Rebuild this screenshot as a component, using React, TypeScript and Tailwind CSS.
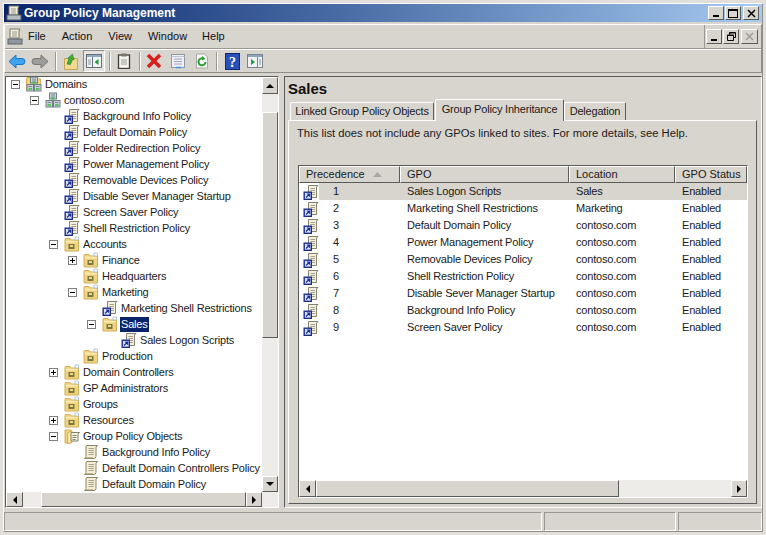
import { ReactNode } from 'react';

const raised = 'border border-t-white border-l-white border-r-[#5a5a58] border-b-[#5a5a58] bg-[#d8d4ce]';

function GpoScroll() {
  return (
    <svg width="16" height="16" viewBox="0 0 16 16" className="shrink-0">
      <path d="M4 1.500h10.500l-1.500 1.500v9.500q0 2-2 2H1.500q1.500-.5 1.500-2V3q0-1.500 1-1.500z" fill="#f4eed6" stroke="#8b8668" />
      <path d="M5.500 4.500h5.500M5.500 6.500h5.500M5.500 8.500h5.500M5.500 10.500h5" stroke="#a8a286" />
      <path d="M3 13.500h7" stroke="#c9bf92" />
    </svg>
  );
}

function GpoLink() {
  return (
    <svg width="16" height="16" viewBox="0 0 16 16" className="shrink-0">
      <path d="M5.500 1.500h9.500l-1.500 1.500v10.500H5.500z" fill="#f3f0e2" stroke="#85826e" />
      <path d="M7.500 4.500h4.500M7.500 6.500h4.500M9 8.500h3M9 10.500h3" stroke="#a4a08a" />
      <rect x="1" y="8" width="7.500" height="7.500" fill="#3c55b5" stroke="#1d2c82" />
      <rect x="2" y="9" width="5.500" height="5.500" fill="#dfe5f6" />
      <path d="M3 13.500l3-3M3.800 10h2.700v2.700" fill="none" stroke="#1c2f96" strokeWidth="1.200" />
    </svg>
  );
}

function OuFolder() {
  return (
    <svg width="16" height="16" viewBox="0 0 16 16" className="shrink-0">
      <path d="M1 3.500q0-1 1-1h4l1 1.500h7.500v11H1z" fill="#f2d37e" stroke="#d1ad5a" />
      <path d="M2 5.500h12" stroke="#fbeeb9" strokeWidth="1.500" />
      <path d="M11 1h3.500v3H11z" fill="#fff" stroke="#9db0c4" strokeWidth=".7" />
      <rect x="4.500" y="8" width="6" height="5" fill="#7c7640" />
      <rect x="6" y="9" width="3" height="2" fill="#e5da85" />
    </svg>
  );
}

function GpoFolder() {
  return (
    <svg width="16" height="16" viewBox="0 0 16 16" className="shrink-0">
      <path d="M1 2h6v13H1z" fill="#f2d37e" stroke="#d1ad5a" />
      <path d="M3.500 5L8 2.500v12L3.500 15.500z" fill="#fbe9a8" stroke="#d1ad5a" />
      <path d="M7 4.500h8.500l-1.500 1.500v7H7z" fill="#f3f0e2" stroke="#85826e" />
      <path d="M8.500 7.500h4M8.500 9.500h4M8.500 11.500h3" stroke="#8d8a78" />
    </svg>
  );
}

function Servers({ folder }: { folder?: boolean }) {
  return (
    <svg width="16" height="16" viewBox="0 0 16 16" className="shrink-0">
      {folder && <path d="M.5 2.500q0-1 1-1h4l1 1.500h8v11.500H.5z" fill="#f2d37e" stroke="#d1ad5a" />}
      <rect x="4.500" y="1" width="7" height="6" fill="#c9d2d6" stroke="#6f7f88" />
      <rect x="1" y="8.500" width="6.500" height="6.500" fill="#c9d2d6" stroke="#6f7f88" />
      <rect x="8.500" y="8.500" width="6.500" height="6.500" fill="#c9d2d6" stroke="#6f7f88" />
      <path d="M6 3h4M6 5h4M2.500 10.500h3.500M10 10.500h3.500" stroke="#7a8a90" />
      <path d="M2.500 13h3.500M10 13h3.500M6.500 6.500h3" stroke="#35c035" strokeWidth="1.300" />
    </svg>
  );
}

function Expander({ open }: { open: boolean }) {
  return (
    <span className="relative block h-[9px] w-[9px] shrink-0 border border-[#7f7f7f] bg-white">
      <span className="absolute left-[1px] top-[3px] h-[1px] w-[5px] bg-black" />
      {!open && <span className="absolute left-[3px] top-[1px] h-[5px] w-[1px] bg-black" />}
    </span>
  );
}

type Node = { label: string; x: number; icon: ReactNode; exp?: 'open' | 'closed'; sel?: boolean };

const indent: Record<number, string> = {
  0: 'pl-[5px]',
  1: 'pl-[24px]',
  2: 'pl-[43px]',
  3: 'pl-[62px]',
  4: 'pl-[81px]',
  5: 'pl-[100px]',
};

const tree: Node[] = [
  { label: 'Domains', x: 0, icon: <Servers folder />, exp: 'open' },
  { label: 'contoso.com', x: 1, icon: <Servers />, exp: 'open' },
  { label: 'Background Info Policy', x: 2, icon: <GpoLink /> },
  { label: 'Default Domain Policy', x: 2, icon: <GpoLink /> },
  { label: 'Folder Redirection Policy', x: 2, icon: <GpoLink /> },
  { label: 'Power Management Policy', x: 2, icon: <GpoLink /> },
  { label: 'Removable Devices Policy', x: 2, icon: <GpoLink /> },
  { label: 'Disable Sever Manager Startup', x: 2, icon: <GpoLink /> },
  { label: 'Screen Saver Policy', x: 2, icon: <GpoLink /> },
  { label: 'Shell Restriction Policy', x: 2, icon: <GpoLink /> },
  { label: 'Accounts', x: 2, icon: <OuFolder />, exp: 'open' },
  { label: 'Finance', x: 3, icon: <OuFolder />, exp: 'closed' },
  { label: 'Headquarters', x: 3, icon: <OuFolder /> },
  { label: 'Marketing', x: 3, icon: <OuFolder />, exp: 'open' },
  { label: 'Marketing Shell Restrictions', x: 4, icon: <GpoLink /> },
  { label: 'Sales', x: 4, icon: <OuFolder />, exp: 'open', sel: true },
  { label: 'Sales Logon Scripts', x: 5, icon: <GpoLink /> },
  { label: 'Production', x: 3, icon: <OuFolder /> },
  { label: 'Domain Controllers', x: 2, icon: <OuFolder />, exp: 'closed' },
  { label: 'GP Administrators', x: 2, icon: <OuFolder /> },
  { label: 'Groups', x: 2, icon: <OuFolder /> },
  { label: 'Resources', x: 2, icon: <OuFolder />, exp: 'closed' },
  { label: 'Group Policy Objects', x: 2, icon: <GpoFolder />, exp: 'open' },
  { label: 'Background Info Policy', x: 3, icon: <GpoScroll /> },
  { label: 'Default Domain Controllers Policy', x: 3, icon: <GpoScroll /> },
  { label: 'Default Domain Policy', x: 3, icon: <GpoScroll /> },
  { label: '', x: 3, icon: <GpoScroll /> },
];

const rows = [
  ['1', 'Sales Logon Scripts', 'Sales'],
  ['2', 'Marketing Shell Restrictions', 'Marketing'],
  ['3', 'Default Domain Policy', 'contoso.com'],
  ['4', 'Power Management Policy', 'contoso.com'],
  ['5', 'Removable Devices Policy', 'contoso.com'],
  ['6', 'Shell Restriction Policy', 'contoso.com'],
  ['7', 'Disable Sever Manager Startup', 'contoso.com'],
  ['8', 'Background Info Policy', 'contoso.com'],
  ['9', 'Screen Saver Policy', 'contoso.com'],
];

function Arrow({ dir }: { dir: 'up' | 'down' | 'left' | 'right' }) {
  const d = { up: 'M4 2l4 4H0z', down: 'M4 6L0 2h8z', left: 'M2 4l4-4v8z', right: 'M6 4L2 0v8z' }[dir];
  return (
    <svg width="8" height="8" viewBox="0 0 8 8">
      <path d={d} fill="#000" />
    </svg>
  );
}

function ScrollBtn({ dir, className }: { dir: 'up' | 'down' | 'left' | 'right'; className: string }) {
  return <div className={`flex shrink-0 items-center justify-center ${raised} ${className}`}><Arrow dir={dir} /></div>;
}

function WinBtn({ children, className }: { children: ReactNode; className: string }) {
  return <div className={`flex items-center justify-center ${raised} ${className}`}>{children}</div>;
}

function Sep() {
  return <div className="h-[19px] w-[2px] shrink-0 border-l border-l-[#9a9892] border-r border-r-white" />;
}

function Tool({ children, className }: { children: ReactNode; className: string }) {
  return <div className={`flex shrink-0 items-center justify-center ${className}`}>{children}</div>;
}

function Toolbar() {
  return (
    <div className="flex h-[23px] items-center border-t border-t-white pl-[2px]">
      <Tool className="w-[20px]">
        <svg width="18" height="15" viewBox="0 0 18 15"><path d="M1 7.500L8 1v3.500h6q3 0 3 3t-3 3H8V14z" fill="#3fa2ee" stroke="#1a78c8" /></svg>
      </Tool>
      <Tool className="ml-[3px] w-[20px]">
        <svg width="18" height="15" viewBox="0 0 18 15"><path d="M17 7.500L10 1v3.500H4q-3 0-3 3t3 3h6V14z" fill="#9c9c98" stroke="#777773" /></svg>
      </Tool>
      <div className="ml-[5px]"><Sep /></div>
      <Tool className="ml-[6px] w-[16px]">
        <svg width="16" height="17" viewBox="0 0 16 17">
          <path d="M1.500 5.500h13v11h-13z" fill="#f3d98f" stroke="#c4a55a" />
          <path d="M4 11l2-5-1.500-.5L9.500 1 11 7l-1.500-.5-2 5z" fill="#3fae35" stroke="#2a7a25" strokeWidth=".6" />
        </svg>
      </Tool>
      <Tool className="ml-[4px] h-[22px] w-[22px] border border-t-[#8f8d88] border-l-[#8f8d88] border-r-white border-b-white bg-[#e6e3de]">
        <svg width="16" height="14" viewBox="0 0 16 14">
          <rect x=".5" y=".5" width="15" height="13" fill="#f2f5f8" stroke="#66707a" />
          <path d="M1 1h14v2H1z" fill="#8aa6c0" />
          <path d="M6.500 3v10" stroke="#66707a" />
          <path d="M12.500 5v6l-4-3z" fill="#1f9a3a" />
          <path d="M2 6h3M2 8h3M2 10h3" stroke="#8a939c" />
        </svg>
      </Tool>
      <div className="ml-[4px]"><Sep /></div>
      <Tool className="ml-[6px] w-[14px]">
        <svg width="14" height="16" viewBox="0 0 14 16">
          <rect x="1.500" y="2" width="11" height="13.500" fill="#f4f3ee" stroke="#3d3d3a" strokeWidth="1.300" />
          <rect x="4.500" y=".5" width="5" height="3" fill="#77766f" />
          <path d="M4 7h6M4 9h6M4 11h6" stroke="#9c9c96" />
        </svg>
      </Tool>
      <div className="ml-[8px]"><Sep /></div>
      <Tool className="ml-[5px] w-[16px]">
        <svg width="16" height="16" viewBox="0 0 16 16"><path d="M2 2l12 12M14 2L2 14" stroke="#d81f1f" strokeWidth="3.600" /></svg>
      </Tool>
      <Tool className="ml-[8px] w-[16px]">
        <svg width="16" height="16" viewBox="0 0 16 16">
          <rect x="1.500" y="1.500" width="13" height="13" fill="#eef0f4" stroke="#8b97a8" />
          <path d="M1.500 3.500h13" stroke="#b9c4d2" />
          <path d="M4 6h8M4 8.500h8M4 11h8" stroke="#9aa4b2" />
          <path d="M6 14.500h5" stroke="#3f8fd8" strokeWidth="1.500" />
        </svg>
      </Tool>
      <Tool className="ml-[9px] w-[14px]">
        <svg width="14" height="16" viewBox="0 0 14 16">
          <path d="M1.500 1h8l3 3v11h-11z" fill="#f7f7f4" stroke="#a8a8a4" />
          <path d="M10.500 9A3.500 3.500 0 1 1 8.500 5.700" fill="none" stroke="#2f9e3a" strokeWidth="2" />
          <path d="M7 3l3.500 2.700L7 7.500z" fill="#2f9e3a" />
        </svg>
      </Tool>
      <div className="ml-[7px]"><Sep /></div>
      <Tool className="ml-[7px] w-[15px]">
        <svg width="15" height="17" viewBox="0 0 15 17">
          <rect x=".5" y=".5" width="14" height="16" fill="#2750b8" stroke="#15286e" />
          <text x="7.500" y="13.500" textAnchor="middle" fontFamily="'Liberation Serif', serif" fontWeight="700" fontSize="14" fill="#fff">?</text>
        </svg>
      </Tool>
      <Tool className="ml-[7px] w-[16px]">
        <svg width="16" height="14" viewBox="0 0 16 14">
          <rect x=".5" y=".5" width="15" height="13" fill="#eef2f6" stroke="#7a848e" />
          <path d="M1 1h14v2H1z" fill="#8aa6c0" />
          <path d="M10.500 3v10" stroke="#7a848e" />
          <path d="M4 5v6l4-3z" fill="#1f9a3a" />
          <path d="M12 6h2M12 8h2M12 10h2" stroke="#8a939c" />
        </svg>
      </Tool>
    </div>
  );
}

function MenuBar() {
  return (
    <div className="flex h-[24px] items-center border-b border-b-[#9a9892] pl-[2px] text-[#111]">
      <svg width="16" height="18" viewBox="0 0 16 18" className="shrink-0">
        <path d="M3 1h10l-1 2v7H3z" fill="#f3eed8" stroke="#77766a" />
        <path d="M5 4h5M5 6h5M5 8h5" stroke="#9a988c" />
        <rect x="1" y="11" width="14" height="5" fill="#8f979f" stroke="#5a626a" />
      </svg>
      <span className="ml-[5px]">File</span>
      <span className="ml-[16px]">Action</span>
      <span className="ml-[16px]">View</span>
      <span className="ml-[16px]">Window</span>
      <span className="ml-[15px]">Help</span>
      <div className="ml-auto flex h-full items-center gap-[1px] border-l border-l-[#9a9892] pl-[1px] pr-[3px]">
        <WinBtn className="h-[15px] w-[16px]"><span className="mt-[7px] h-[2px] w-[6px] bg-black" /></WinBtn>
        <WinBtn className="h-[15px] w-[16px]">
          <svg width="9" height="9" viewBox="0 0 9 9"><path d="M2.500 2.500V.5h6v5H6.500M.5 3h6v5.500h-6z" fill="none" stroke="#000" /><path d="M.5 3.500h6M2.500 1h6" stroke="#000" /></svg>
        </WinBtn>
        <WinBtn className="ml-[1px] h-[15px] w-[17px]">
          <svg width="9" height="9" viewBox="0 0 9 9"><path d="M1 1l7 7M8 1L1 8" stroke="#9c9a94" strokeWidth="1.400" /></svg>
        </WinBtn>
      </div>
    </div>
  );
}

function TreePane() {
  return (
    <div className="ml-[1px] flex w-[274px] shrink-0 flex-col border border-t-[#5a5a58] border-l-[#5a5a58] border-r-white border-b-white bg-white tracking-[-0.2px]">
      <div className="flex min-h-0 flex-1">
        <div className="min-w-0 flex-1 overflow-hidden">
          <div className="-mt-[1px]">
            {tree.map((n, i) => (
              <div key={i} className={`flex h-[16px] items-center whitespace-nowrap ${indent[n.x]}`}>
                <div className="flex w-[10px] shrink-0 items-center">
                  {n.exp && <Expander open={n.exp === 'open'} />}
                </div>
                <div className="ml-[5px]">{n.icon}</div>
                <span className={`ml-[2px] px-[1px] leading-[15px] ${n.sel ? 'bg-[#0a246a] text-white' : ''}`}>{n.label}</span>
              </div>
            ))}
          </div>
        </div>
        <div className="flex w-[16px] shrink-0 flex-col bg-[#eeece8]">
          <ScrollBtn dir="up" className="h-[17px]" />
          <div className={`mt-[18px] h-[226px] shrink-0 ${raised}`} />
          <div className="flex-1" />
          <ScrollBtn dir="down" className="h-[16px]" />
        </div>
      </div>
      <div className="flex h-[15px] shrink-0 bg-[#eeece8]">
        <ScrollBtn dir="left" className="w-[17px]" />
        <div className={`ml-[18px] w-[205px] ${raised}`} />
        <ScrollBtn dir="right" className="w-[16px]" />
      </div>
    </div>
  );
}

const cols = ['w-[101px]', 'w-[169px]', 'w-[106px]', 'flex-1'];
const headCell = 'flex h-full items-center border border-t-white border-l-white border-r-[#5a5a58] border-b-[#5a5a58] bg-[#d8d4ce] pl-[6px]';

function GpoTable() {
  return (
    <div className="ml-[9px] mr-[8px] flex h-[333px] flex-col border border-t-[#5a5a58] border-l-[#5a5a58] border-r-white border-b-white bg-white">
      <div className="flex h-[17px] shrink-0 items-center">
        <div className={`${cols[0]} ${headCell}`}>
          Precedence
          <svg width="9" height="5" viewBox="0 0 9 5" className="ml-[8px]"><path d="M4.500 0L9 5H0z" fill="#a9a7a1" /></svg>
        </div>
        {['GPO', 'Location', 'GPO Status'].map((h, i) => (
          <div key={h} className={`${cols[i + 1]} ${headCell}`}>{h}</div>
        ))}
      </div>
      <div className="flex-1 overflow-hidden tracking-[-0.2px]">
        {rows.map((r, i) => (
          <div key={r[0]} className="flex h-[17px] items-center">
            <div className={`${cols[0]} flex h-full items-center pl-[4px]`}>
              <GpoLink />
              <span className={`flex h-full flex-1 items-center pl-[14px] ${i === 0 ? 'bg-[#d8d4ce]' : ''}`}>{r[0]}</span>
            </div>
            {[r[1], r[2], 'Enabled'].map((c, j) => (
              <div key={j} className={`${cols[j + 1]} flex h-full items-center pl-[7px] ${i === 0 ? 'bg-[#d8d4ce]' : ''}`}>{c}</div>
            ))}
          </div>
        ))}
      </div>
      <div className="flex h-[17px] shrink-0 bg-[#eeece8]">
        <ScrollBtn dir="left" className="w-[17px]" />
        <div className={`w-[303px] ${raised}`} />
        <div className="flex-1" />
        <ScrollBtn dir="right" className="w-[16px]" />
      </div>
    </div>
  );
}

const tab = 'flex items-center justify-center rounded-t-[2px] border border-b-0 border-t-white border-l-white border-r-[#5a5a58] tracking-[-0.2px]';

function RightPane() {
  return (
    <div className="ml-[5px] flex min-w-0 flex-1 flex-col border border-t-[#5a5a58] border-l-[#5a5a58] border-r-white border-b-white pl-[3px] pr-[4px]">
      <div className="h-[22px] pt-[3px] text-[15px] font-bold leading-[18px] text-[#111]">Sales</div>
      <div className="flex h-[21px] items-end pl-[2px]">
        <div className={`${tab} h-[18px] w-[144px]`}>Linked Group Policy Objects</div>
        <div className={`${tab} relative z-10 -mb-[1px] ml-[1px] h-[22px] w-[129px] bg-[#d8d4ce] pb-[3px]`}>Group Policy Inheritance</div>
        <div className={`${tab} h-[18px] w-[62px]`}>Delegation</div>
      </div>
      <div className="flex flex-1 flex-col border border-t-white border-l-white border-r-[#5a5a58] border-b-[#5a5a58]">
        <div className="h-[44px] pl-[8px] pt-[5px] text-[11.25px] leading-[14px]">This list does not include any GPOs linked to sites. For more details, see Help.</div>
        <GpoTable />
      </div>
      <div className="h-[3px] shrink-0" />
    </div>
  );
}

export default function App() {
  return (
    <div className="h-[535px] w-[766px] overflow-hidden border-[3px] border-[#e2dfda] bg-[#d8d4ce] font-['Liberation_Sans',sans-serif] text-[11px] text-[#1a1a1a]">
      <div className="flex h-full flex-col border border-t-white border-l-white border-r-[#8f8d88] border-b-[#8f8d88]">
        <div className="flex h-[18px] shrink-0 items-center bg-gradient-to-r from-[#0a246a] to-[#a6caf0] pl-[2px] pr-[3px]">
          <svg width="16" height="16" viewBox="0 0 16 16" className="shrink-0">
            <path d="M3 1h10l-1 2v7H3z" fill="#f3eed8" stroke="#77766a" />
            <path d="M5 4h5M5 6h5M5 8h5" stroke="#9a988c" />
            <rect x="1" y="10" width="14" height="5" fill="#b4bcc4" stroke="#5a626a" />
          </svg>
          <span className="ml-[2px] text-[12px] font-bold text-white">Group Policy Management</span>
          <div className="ml-auto flex items-center gap-[1px]">
            <WinBtn className="h-[14px] w-[16px]"><span className="mt-[6px] h-[2px] w-[6px] bg-black" /></WinBtn>
            <WinBtn className="mr-[1px] h-[14px] w-[16px]"><span className="h-[9px] w-[10px] border border-t-2 border-black" /></WinBtn>
            <WinBtn className="h-[14px] w-[16px]">
              <svg width="9" height="9" viewBox="0 0 9 9"><path d="M1 1l7 7M8 1L1 8" stroke="#000" strokeWidth="1.500" /></svg>
            </WinBtn>
          </div>
        </div>
        <div className="mt-[2px] shrink-0 border border-t-white border-l-white border-r-[#8f8d88] border-b-[#8f8d88]">
          <MenuBar />
          <Toolbar />
        </div>
        <div className="mt-[3px] flex min-h-0 flex-1">
          <TreePane />
          <RightPane />
        </div>
        <div className="mt-[4px] flex h-[19px] shrink-0">
          <div className="flex-1 border border-t-[#9a9892] border-l-[#9a9892] border-r-white border-b-white" />
          <div className="ml-[2px] w-[132px] border border-t-[#9a9892] border-l-[#9a9892] border-r-white border-b-white" />
          <div className="ml-[2px] w-[84px] border border-t-[#9a9892] border-l-[#9a9892] border-r-white border-b-white" />
        </div>
      </div>
    </div>
  );
}
